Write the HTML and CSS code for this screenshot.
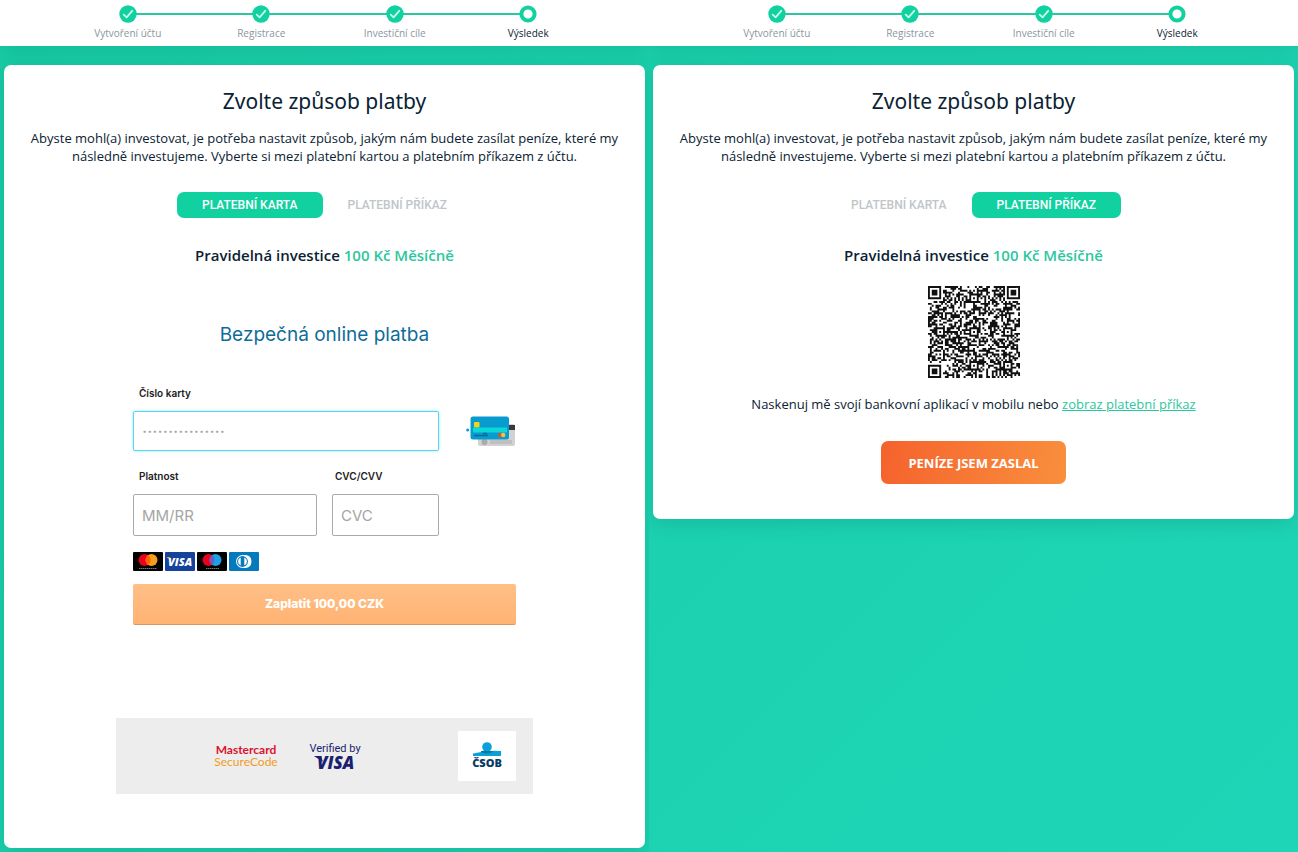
FILE: index.html
```html
<!DOCTYPE html>
<html lang="cs">
<head>
<meta charset="utf-8">
<meta name="viewport" content="width=device-width, initial-scale=1">
<title>Zvolte způsob platby</title>
<link rel="stylesheet" href="styles.css">
</head>
<body>
<svg class="defs" aria-hidden="true">
  <symbol id="done" viewBox="0 0 18 18"><circle cx="9" cy="9" r="8.7" fill="#12d1a0"/><path d="M4.7 9.600l2.900 2.800 5.600-6.600" fill="none" stroke="#c9fbe9" stroke-width="1.800" stroke-linecap="round" stroke-linejoin="round"/></symbol>
  <symbol id="current" viewBox="0 0 18 18"><circle cx="9" cy="9" r="6.600" fill="#fff" stroke="#12d1a0" stroke-width="4"/></symbol>
</svg>
<main class="screens">
  <section class="screen">
    <header class="topbar">
      <ol class="steps">
        <li class="step"><svg class="step-icon"><use href="#done"/></svg>Vytvoření účtu</li>
        <li class="step"><svg class="step-icon"><use href="#done"/></svg>Registrace</li>
        <li class="step"><svg class="step-icon"><use href="#done"/></svg>Investiční cíle</li>
        <li class="step step-current" aria-current="step"><svg class="step-icon"><use href="#current"/></svg>Výsledek</li>
      </ol>
    </header>
    <div class="card card-payment">
      <h1 class="title">Zvolte způsob platby</h1>
      <p class="intro">Abyste mohl(a) investovat, je potřeba nastavit způsob, jakým nám budete zasílat peníze, které my následně investujeme. Vyberte si mezi platební kartou a platebním příkazem z účtu.</p>
      <div class="tabs">
        <button class="tab tab-active" type="button">PLATEBNÍ KARTA</button>
        <button class="tab" type="button">PLATEBNÍ PŘÍKAZ</button>
      </div>
      <p class="plan">Pravidelná investice <span class="plan-value">100 Kč Měsíčně</span></p>
      <div class="gateway">
        <h2 class="gateway-title">Bezpečná online platba</h2>
        <form class="form">
          <label class="label" for="number">Číslo karty</label>
          <div class="number-row">
            <input class="field field-focus" id="number" type="text" placeholder="················">
            <svg class="cards-icon" viewBox="0 0 50 32" aria-hidden="true">
              <rect x="12" y="9" width="37" height="22" rx="2" fill="#d2d2d2"/>
              <path d="M40 10h9v5h-9z" fill="#3a3a3a"/>
              <circle cx="18.500" cy="27" r="3" fill="#aaa"/><path d="M24 25h22v4H24z" fill="#bfbfbf"/>
              <rect x="4.500" y="1.500" width="38.500" height="23" rx="2.500" fill="#079bd0"/>
              <rect x="8" y="7" width="5.500" height="5.500" rx="1" fill="#f2d51b"/>
              <path d="M7 12.500h34v5H7z" fill="#09d7d8"/>
              <path d="M8 20.500h14M17 18.500h4" stroke="#086c9b" stroke-width="1.500"/>
              <circle cx="34" cy="20" r="2.200" fill="#d9542c"/><circle cx="37.200" cy="20" r="2.200" fill="#f3c23a"/>
              <circle cx="1.700" cy="15" r="1.500" fill="#079bd0"/>
            </svg>
          </div>
          <div class="field-row">
            <div class="group group-wide"><label class="label" for="expiry">Platnost</label><input class="field" id="expiry" type="text" placeholder="MM/RR"></div>
            <div class="group group-code"><label class="label" for="cvc">CVC/CVV</label><input class="field" id="cvc" type="text" placeholder="CVC"></div>
          </div>
          <div class="brands">
            <svg class="brand" viewBox="0 0 30 19" role="img" aria-label="Mastercard"><rect width="30" height="19" rx="1"/><circle cx="11.500" cy="8" r="6" fill="#eb001b"/><circle cx="18.500" cy="8" r="6" fill="#f79e1b"/><path d="M15 3.100a6 6 0 0 1 0 9.800 6 6 0 0 1 0-9.800" fill="#ff5f00"/><path d="M6 16.500h18" stroke="#777" stroke-dasharray="1.500 .5"/></svg>
            <svg class="brand" viewBox="0 0 30 19" role="img" aria-label="Visa"><rect width="30" height="19" rx="1" fill="#15429a"/><path d="M1 5h4l1 3z" fill="#e3a63a"/><text class="visa-mark" x="3" y="14" fill="#fff">VISA</text></svg>
            <svg class="brand" viewBox="0 0 30 19" role="img" aria-label="Maestro"><rect width="30" height="19" rx="1"/><circle cx="11.500" cy="8" r="6" fill="#eb001b"/><circle cx="18.500" cy="8" r="6" fill="#1ba2e5"/><path d="M15 3.100a6 6 0 0 1 0 9.800 6 6 0 0 1 0-9.800" fill="#6c5cc0"/><path d="M9 16.500h13" stroke="#777" stroke-dasharray="1.500 .5"/></svg>
            <svg class="brand" viewBox="0 0 30 19" role="img" aria-label="Diners Club"><rect width="30" height="19" rx="1" fill="#0579be"/><path d="M13 3h4a6.600 6.600 0 0 1 0 13h-4z" fill="#fff"/><circle cx="13.500" cy="9.500" r="6.500" fill="#fff"/><circle cx="13.500" cy="9.500" r="5.400" fill="#0579be"/><path d="M11.700 5.600a4.200 4.200 0 0 0 0 7.800zM15.300 5.600a4.200 4.200 0 0 1 0 7.800z" fill="#fff"/></svg>
          </div>
          <button class="pay" type="button">Zaplatit 100,00 CZK</button>
        </form>
        <footer class="trust">
          <p class="securecode"><span class="mc">Mastercard</span><span class="sc">SecureCode</span></p>
          <svg class="verified" viewBox="0 0 58 34" role="img" aria-label="Verified by Visa"><text class="verified-by" x="29" y="13" text-anchor="middle" fill="#1a1f71">Verified by</text><path d="M8 17h7l2 6z" fill="#1a1f71"/><text class="visa-large" x="11" y="30" fill="#1a1f71">VISA</text></svg>
          <span class="bank">
            <svg class="bank-icon" viewBox="0 0 34 30" role="img" aria-label="ČSOB"><circle cx="17" cy="6" r="4.800" fill="#0ba1d8"/><path d="M3 12.500q14-3.500 28-2.500v5H3z" fill="#0ba1d8"/><path d="M11 11q6 3 12 0v-1H11z" fill="#0878aa"/><text class="bank-name" x="17" y="26" text-anchor="middle" fill="#073b66">ČSOB</text></svg>
          </span>
        </footer>
      </div>
    </div>
  </section>

  <section class="screen">
    <header class="topbar">
      <ol class="steps">
        <li class="step"><svg class="step-icon"><use href="#done"/></svg>Vytvoření účtu</li>
        <li class="step"><svg class="step-icon"><use href="#done"/></svg>Registrace</li>
        <li class="step"><svg class="step-icon"><use href="#done"/></svg>Investiční cíle</li>
        <li class="step step-current" aria-current="step"><svg class="step-icon"><use href="#current"/></svg>Výsledek</li>
      </ol>
    </header>
    <div class="card card-transfer">
      <h1 class="title">Zvolte způsob platby</h1>
      <p class="intro">Abyste mohl(a) investovat, je potřeba nastavit způsob, jakým nám budete zasílat peníze, které my následně investujeme. Vyberte si mezi platební kartou a platebním příkazem z účtu.</p>
      <div class="tabs">
        <button class="tab" type="button">PLATEBNÍ KARTA</button>
        <button class="tab tab-active" type="button">PLATEBNÍ PŘÍKAZ</button>
      </div>
      <p class="plan">Pravidelná investice <span class="plan-value">100 Kč Měsíčně</span></p>
      <svg class="qr" viewBox="0 0 49 49" role="img" aria-label="QR platba"><path id="qr-modules" fill="#111"/></svg>
      <p class="scan">Naskenuj mě svojí bankovní aplikací v mobilu nebo <a class="link" href="#">zobraz platební příkaz</a></p>
      <button class="sent" type="button">PENÍZE JSEM ZASLAL</button>
    </div>
  </section>
</main>
<script src="qr.js"></script>
</body>
</html>
```
FILE: styles.css
```css
* { box-sizing: border-box; }
body {
  margin: 0;
  font-family: "Open Sans", "Noto Sans", sans-serif;
  font-size: 13px;
  line-height: 18px;
  color: #0a2233;
}
h1, h2, p, ol { margin: 0; padding: 0; }
button, input { font: inherit; }
.defs { display: none; }
.screens {
  display: grid;
  grid-template-columns: 1fr 1fr;
  min-height: 100vh;
  background: linear-gradient(135deg, #18cba5, #1ed6b7);
}
.screen { overflow: hidden; }
.topbar {
  height: 46px;
  padding: 5px 54px 0 61px;
  background: #fff;
  box-shadow: 0 2px 18px rgba(0, 70, 60, 0.15);
}
.steps { display: grid; grid-template-columns: repeat(4, 1fr); list-style: none; }
.step {
  display: flex;
  flex-direction: column;
  align-items: center;
  position: relative;
  gap: 4px;
  font-size: 10px;
  line-height: 13px;
  color: #8a969e;
}
.step-icon { width: 18px; height: 18px; position: relative; z-index: 1; }
.step + .step::before {
  content: "";
  position: absolute;
  top: 8px;
  right: 50%;
  width: 100%;
  height: 2px;
  background: #2cc79d;
}
.step-current { color: #0a2233; }
.card {
  display: flex;
  flex-direction: column;
  align-items: center;
  margin: 19px 4px 4px;
  border-radius: 7px;
  background: #fff;
  box-shadow: 0 4px 20px rgba(0, 80, 70, 0.18);
  text-align: center;
}
.card-payment { padding: 22px 24px 54px; }
.card-transfer { padding: 22px 24px 35px; }
.title { font-family: "Noto Sans", sans-serif; font-size: 21px; line-height: 28px; font-weight: 400; }
.intro { margin-top: 14px; }
.tabs { display: flex; margin-top: 27px; }
.tab {
  height: 26px;
  padding: 0 25px;
  border: 0;
  border-radius: 7px;
  background: none;
  color: #c0c5c9;
  font-family: Roboto, sans-serif;
  font-size: 12px;
  font-weight: 500;
}
.tab-active { background: #12d1a0; color: #fff; }
.plan { margin-top: 26px; font-size: 15px; line-height: 22px; font-weight: 600; }
.plan-value { color: #2cc79d; }
.gateway { width: 100%; max-width: 417px; margin-top: 57px; font-family: Inter, sans-serif; }
.gateway-title { color: #0f6c98; font-size: 19px; line-height: 24px; font-weight: 400; }
.form { display: flex; flex-direction: column; padding: 38px 17px 0; text-align: left; }
.label { padding-left: 6px; color: #222; font-size: 10px; line-height: 16px; font-weight: 600; }
.number-row { display: grid; grid-template-columns: 1fr 50px; gap: 27px; align-items: center; margin-top: 10px; }
.cards-icon { width: 50px; height: 32px; }
.field {
  width: 100%;
  height: 42px;
  padding: 0 8px;
  border: 1px solid #aaa;
  border-radius: 2px;
  outline: 0;
  font-size: 15px;
}
.field-focus { height: 40px; border-color: #5fd3ee; box-shadow: 0 0 3px #8ce5f7; font-size: 18px; }
.field::placeholder { color: #a5a5a5; }
.field-row { display: flex; gap: 15px; margin: 17px 77px 0 0; }
.group { display: flex; flex-direction: column; gap: 10px; width: 107px; }
.group-wide { flex: 1; }
.group-code .label { padding-left: 3px; }
.brands { display: flex; gap: 2px; margin-top: 16px; }
.brand { width: 30px; height: 19px; }
.visa-mark { font: italic 800 11px "Open Sans", sans-serif; }
.pay {
  height: 41px;
  margin-top: 13px;
  border: 0;
  border-bottom: 1px solid #db9560;
  border-radius: 2px;
  background: linear-gradient(#ffbf87, #ffb373);
  color: #fff;
  font-size: 12px;
  font-weight: 800;
}
.trust {
  display: flex;
  align-items: center;
  height: 76px;
  margin-top: 93px;
  padding: 0 17px 0 97px;
  gap: 27px;
  background: #ededed;
}
.securecode {
  display: flex;
  flex-direction: column;
  align-items: center;
  width: 66px;
  font-family: Lato, sans-serif;
  font-size: 12px;
  line-height: 12px;
}
.mc { color: #dc1230; font-weight: 700; }
.sc { color: #f39a1e; }
.verified { width: 58px; height: 34px; }
.verified-by { font: 400 11px Roboto, sans-serif; }
.visa-large { font: italic 800 17px "Open Sans", sans-serif; }
.bank { display: grid; place-items: center; width: 58px; height: 50px; margin-left: auto; background: #fff; }
.bank-icon { width: 34px; height: 30px; }
.bank-name { font: 800 11px "Open Sans", sans-serif; }
.qr { width: 92px; height: 92px; margin-top: 20px; }
.scan { margin-top: 17px; }
.link { color: #2cc79d; }
.sent {
  height: 43px;
  margin-top: 28px;
  padding: 0 27px;
  border: 0;
  border-radius: 7px;
  background: linear-gradient(100deg, #f5622d, #f98f3d);
  color: #fff;
  font-weight: 700;
}
@media (max-width: 900px) {
  .screens { grid-template-columns: 1fr; }
}
```
FILE: qr.js
```js
// Draws a 49-module code: finder, timing and alignment patterns around the data area.
const size = 49;
let seed = 20117;
const next = () => (seed = (seed * 1103515245 + 12345) % 2147483648) / 2147483648;
const grid = Array.from({ length: size }, () => Array.from({ length: size }, () => next() < 0.52));

function rings(cx, cy, radius, light) {
  for (let y = -radius; y <= radius; y++) {
    for (let x = -radius; x <= radius; x++) {
      const row = grid[cy + y];
      if (row && cx + x >= 0 && cx + x < size) {
        row[cx + x] = !light.includes(Math.max(Math.abs(x), Math.abs(y)));
      }
    }
  }
}
for (let i = 8; i < size - 8; i++) grid[6][i] = grid[i][6] = i % 2 === 0;
[[24, 6], [6, 24], [24, 24], [42, 24], [24, 42], [42, 42]].forEach(([x, y]) => rings(x, y, 2, [1]));
[[3, 3], [45, 3], [3, 45]].forEach(([x, y]) => rings(x, y, 4, [2, 4]));

let path = "";
grid.forEach((row, y) => row.forEach((dark, x) => { if (dark) path += `M${x} ${y}h1v1h-1z`; }));
document.getElementById("qr-modules").setAttribute("d", path);
```
